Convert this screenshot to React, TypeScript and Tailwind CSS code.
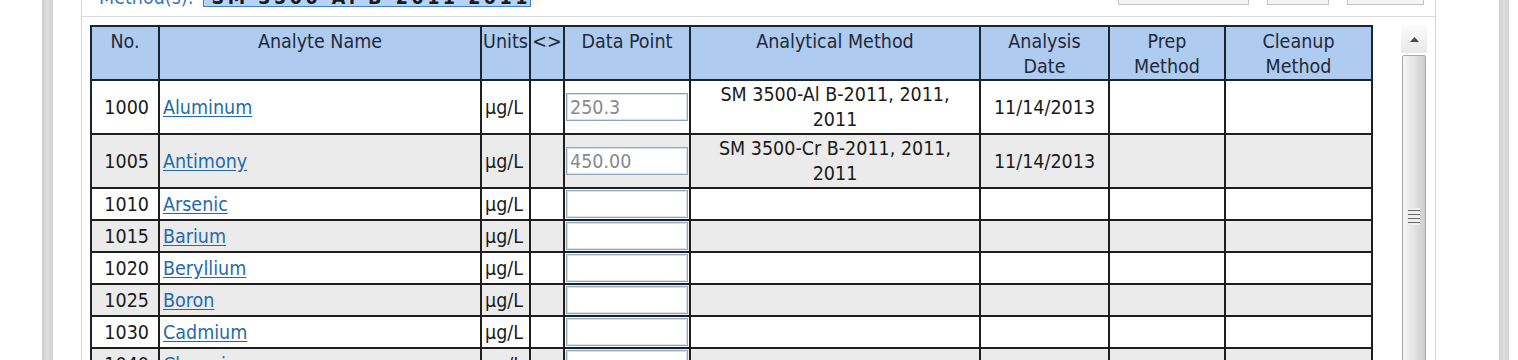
const cols = "grid grid-cols-[68px_322px_49px_34px_126px_290px_129px_116px_147px]";

type Row = {
  no: string;
  name: string;
  value?: string;
  method?: string[];
  date?: string;
  tall?: boolean;
};

const rows: Row[] = [
  { no: "1000", name: "Aluminum", value: "250.3", method: ["SM 3500-Al B-2011, 2011,", "2011"], date: "11/14/2013", tall: true },
  { no: "1005", name: "Antimony", value: "450.00", method: ["SM 3500-Cr B-2011, 2011,", "2011"], date: "11/14/2013", tall: true },
  { no: "1010", name: "Arsenic" },
  { no: "1015", name: "Barium" },
  { no: "1020", name: "Beryllium" },
  { no: "1025", name: "Boron" },
  { no: "1030", name: "Cadmium" },
  { no: "1040", name: "Chromium" },
];

const cell = "border-r-2 border-b-2 border-[#1f1f1f]";
const head = "border-r-2 border-b-2 border-[#1b2532] pt-[2px] text-center text-[#1d2a3a]";

function Header() {
  return (
    <div className={`${cols} h-[54px] bg-[#afcbf0]`}>
      <div className={head}>No.</div>
      <div className={head}>Analyte Name</div>
      <div className={head}>Units</div>
      <div className={head}>&lt;&gt;</div>
      <div className={head}>Data Point</div>
      <div className={head}>Analytical Method</div>
      <div className={head}>Analysis<br />Date</div>
      <div className={head}>Prep<br />Method</div>
      <div className={head}>Cleanup<br />Method</div>
    </div>
  );
}

function DataRow({ row, odd }: { row: Row; odd: boolean }) {
  return (
    <div className={`${cols} ${row.tall ? "h-[54px]" : "h-[32px]"} ${odd ? "bg-[#ebebeb]" : "bg-white"}`}>
      <div className={`${cell} flex items-center justify-end pr-[9px]`}>{row.no}</div>
      <div className={`${cell} flex items-center pl-[3px]`}>
        <a href="#" className="text-[#1f6aad] underline underline-offset-2">{row.name}</a>
      </div>
      <div className={`${cell} flex items-center pl-[3px]`}>µg/L</div>
      <div className={cell}></div>
      <div className={`${cell} flex items-center pl-[1px]`}>
        <input
          readOnly
          value={row.value ?? ""}
          className="h-[28px] w-[122px] border border-[#8fa8c0] bg-white px-[3px] text-[#8a8a8a] shadow-[inset_0_0_0_1px_#d6e1ec] outline-none"
        />
      </div>
      <div className={`${cell} flex flex-col items-center justify-center text-center`}>
        {row.method?.map((l) => (
          <span key={l}>{l}</span>
        ))}
      </div>
      <div className={`${cell} flex items-center justify-center`}>{row.date}</div>
      <div className={cell}></div>
      <div className={cell}></div>
    </div>
  );
}

function Scrollbar() {
  return (
    <div className="ml-[28px] flex w-[26px] shrink-0 flex-col">
      <div className="flex h-[28px] shrink-0 items-center justify-center bg-linear-to-b from-[#fbfbfb] to-[#e9e9e9]">
        <svg width="9" height="5" viewBox="0 0 9 5">
          <path d="M0 5 L4.5 0 L9 5 Z" fill="#4a4a4a" />
        </svg>
      </div>
      <div className="mx-[1px] mt-[2px] flex h-[320px] shrink-0 flex-col items-center rounded-[2px] border border-[#a8a8a8] bg-linear-to-r from-[#f5f5f5] via-[#e4e4e4] to-[#cdcdcd] pt-[152px]">
        <div className="flex w-[12px] flex-col gap-[3px] bg-[#eeeeee] py-[2px]">
          <div className="h-[1px] bg-[#6b6b6b]" />
          <div className="h-[1px] bg-[#6b6b6b]" />
          <div className="h-[1px] bg-[#6b6b6b]" />
          <div className="h-[1px] bg-[#6b6b6b]" />
        </div>
      </div>
    </div>
  );
}

export default function App() {
  return (
    <div className="flex h-[360px] w-[1518px] overflow-hidden bg-white font-['DejaVu_Sans_Condensed','DejaVu_Sans',sans-serif] text-[19.5px] leading-[25px] text-[#1a1a1a]">
      <div className="w-[42px] shrink-0" />
      <div className="w-[11px] shrink-0 bg-linear-to-r from-[#cfcfcf] via-[#dedede] to-[#d2d2d2]" />
      <div className="w-[28px] shrink-0" />

      <div className="flex w-[1355px] shrink-0 flex-col border-x border-[#d6d6d6]">
        {/* method line, mostly scrolled off the top */}
        <div className="flex h-[17px] shrink-0 items-start border-b border-[#dcdcdc]">
          <span className="-mt-[15px] ml-[17px] text-[#3c74ba]">Method(s):</span>
          <div className="-mt-[21px] ml-[9px] flex h-[28px] w-[328px] items-end overflow-hidden border border-[#3f7fcc] bg-[#b7d2f4] px-[8px] font-bold leading-[16px] tracking-[3.5px] whitespace-nowrap text-[#1a1a1a]">
            SM 3500-Al B-2011 2011
          </div>
          <div className="flex-1" />
          <div className="-mt-[25px] h-[30px] w-[131px] border border-[#c4c4c4] bg-[#f4f4f4]" />
          <div className="-mt-[25px] ml-[18px] h-[30px] w-[62px] border border-[#c4c4c4] bg-[#f4f4f4]" />
          <div className="-mt-[25px] ml-[18px] mr-[11px] h-[30px] w-[77px] border border-[#c4c4c4] bg-[#f4f4f4]" />
        </div>

        <div className="flex shrink-0 pl-[8px] pt-[8px]">
          <div className="w-[1283px] shrink-0 border-l-2 border-t-2 border-[#1b2532]">
            <Header />
            {rows.map((r, i) => (
              <DataRow key={r.no} row={r} odd={i % 2 === 1} />
            ))}
          </div>
          <Scrollbar />
        </div>
      </div>

      <div className="w-[63px] shrink-0" />
      <div className="w-[10px] shrink-0 bg-linear-to-r from-[#d0d0d0] via-[#dddddd] to-[#d3d3d3]" />
    </div>
  );
}
